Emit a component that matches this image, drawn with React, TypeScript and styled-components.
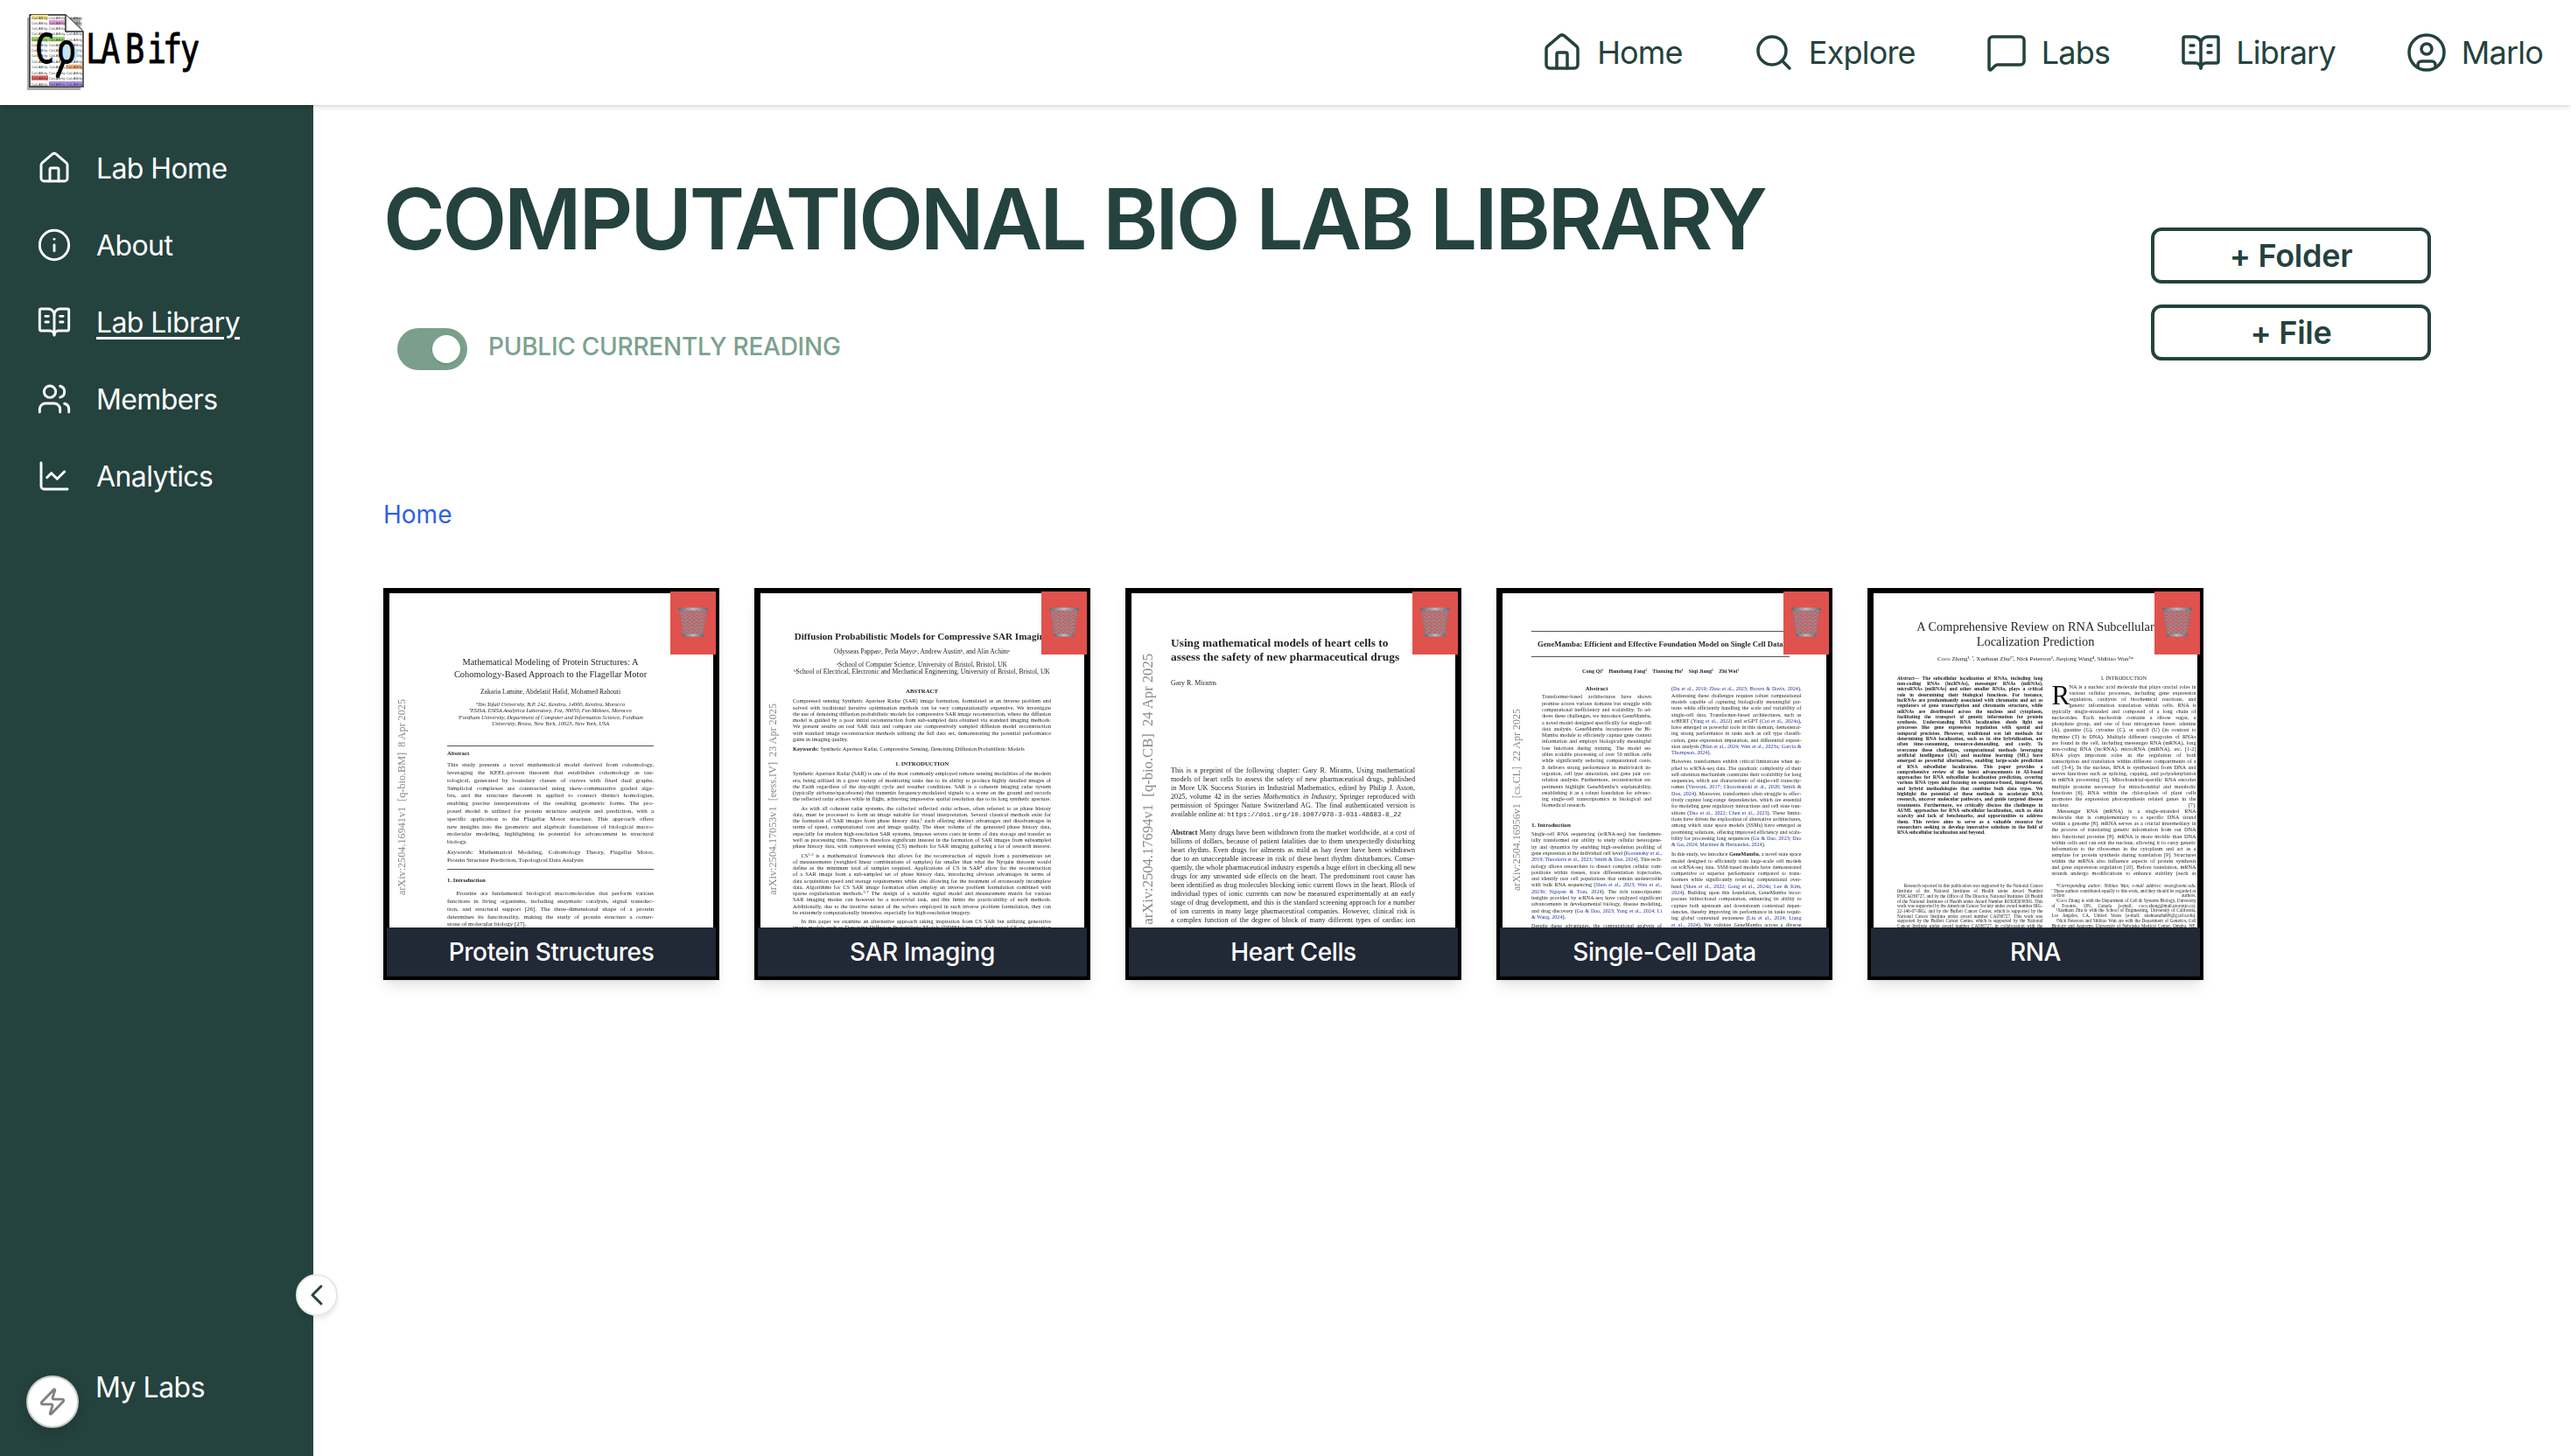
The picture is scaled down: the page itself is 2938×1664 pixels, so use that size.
import { FC, ReactNode } from 'react'
import { createGlobalStyle, styled } from 'styled-components'
import {
  BookOpenText,
  ChartLine,
  ChevronLeft,
  CircleUser,
  House,
  Info,
  MessageSquare,
  Search,
  Users,
  Zap,
} from 'lucide-react'

const DARK = '#24423e'

const GlobalStyle = createGlobalStyle`
  html, body {
    margin: 0;
    padding: 0;
    background: #fff;
    font-family: Inter, "Liberation Sans", sans-serif;
  }
`

const Page = styled.div`
  width: 2938px;
  height: 1664px;
  display: flex;
  flex-direction: column;
  overflow: hidden;
`

const Header = styled.header`
  position: relative;
  z-index: 2;
  flex: 0 0 120px;
  display: flex;
  align-items: center;
  justify-content: space-between;
  padding-right: 32px;
  background: #fff;
  box-shadow: 0 4px 6px -1px rgba(0, 0, 0, 0.1), 0 2px 4px -2px rgba(0, 0, 0, 0.1);
`

const LogoSvg = styled.svg`
  display: block;
  width: 250px;
  height: 120px;
`

const TopNav = styled.nav`
  display: flex;
  align-items: center;
  gap: 80px;
`

const TopLink = styled.a`
  display: flex;
  align-items: center;
  gap: 16px;
  color: ${DARK};
  font-size: 36px;
  line-height: 48px;
  letter-spacing: -0.8px;
`

const Body = styled.div`
  flex: 1;
  display: flex;
  min-height: 0;
`

const Sidebar = styled.aside`
  position: relative;
  flex: 0 0 358px;
  display: flex;
  flex-direction: column;
  box-sizing: border-box;
  padding: 48px 0 32px;
  background: ${DARK};
  color: #fff;
`

const SideList = styled.ul`
  flex: 1;
  list-style: none;
  margin: 0;
  padding: 0 0 0 42px;
  display: flex;
  flex-direction: column;
  gap: 40px;
`

const SideItem = styled.li<{ $active?: boolean }>`
  display: flex;
  align-items: center;
  gap: 28px;
  height: 48px;
  font-size: 32px;
  letter-spacing: -0.6px;
  text-decoration: ${({ $active }) => ($active ? 'underline' : 'none')};
  text-underline-offset: 5px;
  text-decoration-thickness: 3px;
`

const LabsRow = styled.div`
  display: flex;
  align-items: flex-start;
  gap: 19px;
  padding-left: 30px;
  font-size: 32px;
  letter-spacing: -0.5px;
`

const LabsBadge = styled.div`
  box-sizing: border-box;
  width: 60px;
  height: 60px;
  display: flex;
  align-items: center;
  justify-content: center;
  border: 2px solid #ccc;
  border-radius: 50%;
  background: #fff;
  color: #808080;
  box-shadow: 0 4px 16px rgba(0, 0, 0, 0.15);
`

const LabsText = styled.span`
  margin-top: -10px;
  line-height: 48px;
`

const Collapse = styled.button`
  position: absolute;
  right: -28px;
  bottom: 160px;
  box-sizing: border-box;
  width: 48px;
  height: 48px;
  padding: 0;
  display: flex;
  align-items: center;
  justify-content: center;
  border: 2px solid #e5e7eb;
  border-radius: 50%;
  background: #fff;
  color: ${DARK};
  box-shadow: 0 4px 6px -1px rgba(0, 0, 0, 0.1);
`

const Main = styled.main`
  flex: 1;
  box-sizing: border-box;
  padding: 0 160px 0 80px;
  min-width: 0;
`

const TopRow = styled.div`
  display: flex;
  align-items: flex-start;
  justify-content: space-between;
  height: 430px;
`

const Title = styled.h1`
  margin: 72px 0 0;
  color: ${DARK};
  font-size: 96px;
  line-height: 116px;
  font-weight: 600;
  letter-spacing: -3.2px;
  white-space: nowrap;
`

const ToggleRow = styled.div`
  display: flex;
  align-items: center;
  gap: 24px;
  margin: 67px 0 0 16px;
`

const Track = styled.div`
  box-sizing: border-box;
  width: 80px;
  height: 48px;
  display: flex;
  justify-content: flex-end;
  padding: 8px;
  border-radius: 24px;
  background: #7aa08d;
`

const Knob = styled.div`
  width: 32px;
  height: 32px;
  border-radius: 50%;
  background: #fff;
  box-shadow: 0 1px 3px rgba(0, 0, 0, 0.15);
`

const ToggleLabel = styled.span`
  margin-top: -6px;
  color: #7ba28e;
  font-size: 28px;
  font-weight: 500;
  letter-spacing: -0.25px;
`

const Actions = styled.div`
  display: flex;
  flex-direction: column;
  gap: 24px;
  margin-top: 140px;
`

const ActionButton = styled.button`
  box-sizing: border-box;
  width: 320px;
  height: 64px;
  padding: 0;
  border: 4px solid ${DARK};
  border-radius: 12px;
  background: #fff;
  color: ${DARK};
  font-family: inherit;
  font-size: 36px;
  font-weight: 600;
  letter-spacing: -0.3px;
`

const Crumb = styled.a`
  display: block;
  margin-top: 18px;
  color: #2f5fe8;
  font-size: 28px;
  line-height: 40px;
`

const CardRow = styled.div`
  display: flex;
  gap: 40px;
  margin-top: 64px;
`

const Card = styled.article`
  position: relative;
  box-sizing: border-box;
  width: 384px;
  height: 448px;
  display: flex;
  flex-direction: column;
  border: 4px solid #000;
  background: #000;
  box-shadow: 0 10px 15px -3px rgba(0, 0, 0, 0.1), 0 4px 6px -4px rgba(0, 0, 0, 0.1);
`

const Sheet = styled.div<{ $top: number; $left: number; $right: number }>`
  position: relative;
  box-sizing: border-box;
  height: 382px;
  margin: 2px 3px 0;
  padding: ${({ $top, $left, $right }) => `${$top}px ${$right}px 0 ${$left}px`};
  overflow: hidden;
  background: #fff;
  color: #262626;
  font-family: "Liberation Serif", serif;
  filter: blur(0.3px);
`

const Stamp = styled.span<{ $left: number; $bottom: number; $size: number }>`
  position: absolute;
  left: ${({ $left }) => $left}px;
  bottom: ${({ $bottom }) => $bottom}px;
  writing-mode: vertical-rl;
  transform: rotate(180deg);
  color: #8a8a8a;
  font-size: ${({ $size }) => $size}px;
  line-height: 1;
  white-space: pre;
`

const Rule = styled.hr<{ $mt: number }>`
  height: 1px;
  margin: ${({ $mt }) => $mt}px 0 0;
  border: 0;
  background: #555;
`

const TextBlock = styled.div<{
  $size: number
  $lh: number
  $mt: number
  $inset: number
  $bold?: boolean
  $italic?: boolean
  $center?: boolean
  $ragged?: boolean
  $cut?: boolean
}>`
  margin: ${({ $mt, $inset }) => `${$mt}px ${$inset}px 0`};
  font-size: ${({ $size }) => $size}px;
  line-height: ${({ $lh }) => $lh}px;
  font-weight: ${({ $bold }) => ($bold ? 700 : 400)};
  font-style: ${({ $italic }) => ($italic ? 'italic' : 'normal')};
  text-align: ${({ $center }) => ($center ? 'center' : 'left')};
  white-space: nowrap;

  & > div {
    text-align-last: ${({ $center, $ragged }) =>
      $center ? 'center' : $ragged ? 'left' : 'justify'};
  }

  & > div:last-child {
    text-align-last: ${({ $center, $cut }) =>
      $center ? 'center' : $cut ? 'justify' : 'left'};
  }
`

const Cite = styled.span`
  color: #26349a;
`

const Url = styled.span`
  font-family: "Liberation Mono", monospace;
  font-size: 0.92em;
`

const Columns = styled.div<{ $mt: number; $gap: number }>`
  display: grid;
  grid-template-columns: 1fr 1fr;
  column-gap: ${({ $gap }) => $gap}px;
  margin-top: ${({ $mt }) => $mt}px;
`

const DropCap = styled.span`
  float: left;
  width: 20px;
  height: 28px;
  font-size: 31px;
  line-height: 27px;
  color: #111;
`

const CardLabel = styled.div`
  flex: 1;
  display: flex;
  align-items: center;
  justify-content: center;
  background: #212836;
  color: #fff;
  font-size: 28px;
  font-weight: 500;
  letter-spacing: -0.4px;
`

const TrashButton = styled.div`
  position: absolute;
  top: 0;
  right: 0;
  width: 52px;
  height: 72px;
  display: flex;
  align-items: center;
  justify-content: center;
  background: #e0524e;
`

// tiny markup for the paper text: {cite} **bold** __italic__ ~~url~~
const rich = (line: string): ReactNode[] =>
  line.split(/(\{[^}]+\}|\*\*[^*]+\*\*|__[^_]+__|~~[^~]+~~)/).map((part, i) => {
    if (part.startsWith('{')) return <Cite key={i}>{part.slice(1, -1)}</Cite>
    if (part.startsWith('**')) return <b key={i}>{part.slice(2, -2)}</b>
    if (part.startsWith('__')) return <i key={i}>{part.slice(2, -2)}</i>
    if (part.startsWith('~~')) return <Url key={i}>{part.slice(2, -2)}</Url>
    return part
  })

const Para: FC<{
  lines: string[]
  size: number
  lh: number
  mt?: number
  inset?: number
  bold?: boolean
  italic?: boolean
  center?: boolean
  ragged?: boolean
  cut?: boolean
  lead?: ReactNode
}> = ({ lines, size, lh, mt = 0, inset = 0, bold, italic, center, ragged, cut, lead }) => (
  <TextBlock
    $size={size}
    $lh={lh}
    $mt={mt}
    $inset={inset}
    $bold={bold}
    $italic={italic}
    $center={center}
    $ragged={ragged}
    $cut={cut}
  >
    {lead}
    {lines.map((line, i) => (
      <div key={i}>{rich(line)}</div>
    ))}
  </TextBlock>
)

const WasteBasket = () => (
  <svg width="36" height="38" viewBox="0 0 36 38">
    <defs>
      <pattern id="mesh" width="5.6" height="4" patternUnits="userSpaceOnUse">
        <path d="M0 0L5.6 4M5.6 0L0 4" stroke="#87919c" strokeWidth="1.1" />
      </pattern>
      <linearGradient id="rim" x1="0" x2="1" y1="0" y2="0">
        <stop offset="0" stopColor="#5d6772" />
        <stop offset="0.5" stopColor="#b5bfc9" />
        <stop offset="1" stopColor="#5d6772" />
      </linearGradient>
    </defs>
    <path d="M3 4L7 33H29L33 4Z" fill="url(#mesh)" />
    <path d="M3 4L7 33M33 4L29 33" stroke="#76808b" strokeWidth="1" fill="none" />
    <rect x="1" y="1.5" width="34" height="3" rx="1.5" fill="url(#rim)" />
    <rect x="6" y="31.5" width="24" height="3" rx="1.5" fill="url(#rim)" />
  </svg>
)

const ProteinPaper = () => (
  <Sheet $top={72} $left={66} $right={68}>
    <Stamp $left={8} $bottom={37} $size={12.2}>{'arXiv:2504.16941v1  [q-bio.BM]  8 Apr 2025'}</Stamp>
    <Para
      size={10.4}
      lh={14}
      center
      lines={[
        'Mathematical Modeling of Protein Structures: A',
        'Cohomology-Based Approach to the Flagellar Motor',
      ]}
    />
    <Para size={7.6} lh={10} mt={8} center lines={['Zakaria Lamine, Abdelatif Hafid, Mohamed Rahouti']} />
    <Para
      size={6.4}
      lh={7.4}
      mt={5}
      center
      italic
      lines={[
        'ᵃIbn Tofail University, B.P. 242, Kenitra, 14000, Kenitra, Morocco',
        'ᵇESISA, ESISA Analytica Laboratory, Fez, 30050, Fez-Meknes, Morocco',
        'ᶜFordham University, Department of Computer and Information Science, Fordham',
        'University, Bronx, New York, 10023, New York, USA',
      ]}
    />
    <Rule $mt={21} />
    <Para size={6.8} lh={8.8} mt={4.6} bold lines={['Abstract']} />
    <Para
      size={7}
      lh={8.8}
      mt={4.2}
      lines={[
        'This study presents a novel mathematical model derived from cohomology,',
        'leveraging the KEEL-proven theorem that establishes cohomology as tau-',
        'tological, generated by boundary classes of curves with fixed dual graphs.',
        'Simplicial complexes are constructed using skew-commutative graded alge-',
        'bra, and the structure theorem is applied to connect distinct homologies,',
        'enabling precise interpretations of the resulting geometric forms. The pro-',
        'posed model is utilized for protein structure analysis and prediction, with a',
        'specific application to the Flagellar Motor structure. This approach offers',
        'new insights into the geometric and algebraic foundations of biological macro-',
        'molecular modeling, highlighting its potential for advancement in structural',
        'biology.',
      ]}
    />
    <Para
      size={7}
      lh={8.8}
      mt={3.2}
      lines={[
        '__Keywords:__ Mathematical Modeling, Cohomology Theory, Flagellar Motor,',
        'Protein Structure Prediction, Topological Data Analysis',
      ]}
    />
    <Rule $mt={4.8} />
    <Para size={6.8} lh={8.8} mt={8.6} bold lines={['1. Introduction']} />
    <Para
      size={7}
      lh={8.8}
      mt={6.2}
      lines={[
        '\u2003\u2002Proteins are fundamental biological macromolecules that perform various',
        'functions in living organisms, including enzymatic catalysis, signal transduc-',
        'tion, and structural support [26]. The three-dimensional shape of a protein',
        'determines its functionality, making the study of protein structure a corner-',
        'stone of molecular biology [27].',
      ]}
    />
  </Sheet>
)

const SarPaper = () => (
  <Sheet $top={43} $left={37} $right={38}>
    <Stamp $left={8} $bottom={37} $size={12.2}>{'arXiv:2504.17053v1  [eess.IV]  23 Apr 2025'}</Stamp>
    <Para size={11.1} lh={12} bold center lines={['Diffusion Probabilistic Models for Compressive SAR Imaging']} />
    <Para size={7.6} lh={10} mt={7} center lines={['Odysseas Pappasᵃ, Perla Mayoᵃ, Andrew Austinᵇ, and Alin Achimᵃ']} />
    <Para
      size={7.6}
      lh={8}
      mt={6}
      center
      lines={[
        'ᵃSchool of Computer Science, University of Bristol, Bristol, UK',
        'ᵇSchool of Electrical, Electronic and Mechanical Engineering, University of Bristol, Bristol, UK',
      ]}
    />
    <Para size={6.8} lh={8} mt={14} bold center lines={['ABSTRACT']} />
    <Para
      size={6.4}
      lh={7.25}
      mt={3.4}
      lines={[
        'Compressed sensing Synthetic Aperture Radar (SAR) image formation, formulated as an inverse problem and',
        'solved with traditional iterative optimisation methods can be very computationally expensive. We investigate',
        'the use of denoising diffusion probabilistic models for compressive SAR image reconstruction, where the diffusion',
        'model is guided by a poor initial reconstruction from sub-sampled data obtained via standard imaging methods.',
        'We present results on real SAR data and compare our compressively sampled diffusion model reconstruction',
        'with standard image reconstruction methods utilising the full data set, demonstrating the potential performance',
        'gains in imaging quality.',
      ]}
    />
    <Para
      size={6.4}
      lh={7.25}
      mt={4.3}
      lines={['**Keywords:** Synthetic Aperture Radar, Compressive Sensing, Denoising Diffusion Probabilistic Models']}
    />
    <Para size={6.8} lh={8} mt={9.4} bold center lines={['1. INTRODUCTION']} />
    <Para
      size={6.4}
      lh={7.25}
      mt={3.4}
      cut
      lines={[
        'Synthetic Aperture Radar (SAR) is one of the most commonly employed remote sensing modalities of the modern',
        'era, being utilized in a great variety of monitoring tasks due to its ability to produce highly detailed images of',
        'the Earth regardless of the day-night cycle and weather conditions. SAR is a coherent imaging radar system',
        '(typically airborne/spaceborne) that transmits frequency-modulated signals to a scene on the ground and records',
        'the reflected radar echoes while in flight, achieving impressive spatial resolution due to its long synthetic aperture.',
      ]}
    />
    <Para
      size={6.4}
      lh={7.25}
      mt={2.8}
      cut
      lines={[
        '\u2003\u2002As with all coherent radar systems, the collected reflected radar echoes, often referred to as phase history',
        'data, must be processed to form an image suitable for visual interpretation. Several classical methods exist for',
        'the formation of SAR images from phase history data,{¹} each offering distinct advantages and disadvantages in',
        'terms of speed, computational cost and image quality. The sheer volume of the generated phase history data,',
        'especially for modern high-resolution SAR systems, imposes severe costs in terms of data storage and transfer as',
        'well as processing time. There is therefore significant interest in the formation of SAR images from subsampled',
        'phase history data, with compressed sensing (CS) methods for SAR imaging gathering a lot of research interest.',
      ]}
    />
    <Para
      size={6.4}
      lh={7.25}
      mt={3.4}
      lines={[
        '\u2003\u2002CS{²·³} is a mathematical framework that allows for the reconstruction of signals from a parsimonious set',
        'of measurements (weighted linear combinations of samples) far smaller than what the Nyquist theorem would',
        'define as the minimum total of samples required. Applications of CS in SAR{⁴} allow for the reconstruction',
        'of a SAR image from a sub-sampled set of phase history data, introducing obvious advantages in terms of',
        'data acquisition speed and storage requirements while also allowing for the treatment of erroneously incomplete',
        'data. Algorithms for CS SAR image formation often employ an inverse problem formulation combined with',
        'sparse regularisation methods.{⁵⁻⁷} The design of a suitable signal model and measurement matrix for various',
        'SAR imaging modes can however be a non-trivial task, and this limits the practicability of such methods.',
        'Additionally, due to the iterative nature of the solvers employed in such inverse problem formulation, they can',
        'be extremely computationally intensive, especially for high-resolution imagery.',
      ]}
    />
    <Para
      size={6.4}
      lh={7.25}
      mt={2.5}
      cut
      lines={[
        '\u2003\u2002In this paper we examine an alternative approach taking inspiration from CS SAR but utilizing generative',
        'image models such as Denoising Diffusion Probabilistic Models (DDPMs) instead of classical CS reconstruction',
      ]}
    />
  </Sheet>
)

const HeartPaper = () => (
  <Sheet $top={49} $left={45} $right={46}>
    <Stamp $left={11} $bottom={3} $size={16.6}>{'arXiv:2504.17694v1  [q-bio.CB]  24 Apr 2025'}</Stamp>
    <Para
      size={13.4}
      lh={16}
      bold
      ragged
      lines={['Using mathematical models of heart cells to', 'assess the safety of new pharmaceutical drugs']}
    />
    <Para size={8} lh={10} mt={17} lines={['Gary R. Mirams']} />
    <Para
      size={8.2}
      lh={10}
      mt={90}
      lines={[
        'This is a preprint of the following chapter: Gary R. Mirams, Using mathematical',
        'models of heart cells to assess the safety of new pharmaceutical drugs, published',
        'in More UK Success Stories in Industrial Mathematics, edited by Philip J. Aston,',
        '2025, volume 42 in the series __Mathematics in Industry__, Springer reproduced with',
        'permission of Springer Nature Switzerland AG. The final authenticated version is',
        'available online at: ~~https://doi.org/10.1007/978-3-031-48683-8_22~~',
      ]}
    />
    <Para
      size={8.2}
      lh={10}
      mt={11}
      cut
      lines={[
        '**Abstract** Many drugs have been withdrawn from the market worldwide, at a cost of',
        'billions of dollars, because of patient fatalities due to them unexpectedly disturbing',
        'heart rhythm. Even drugs for ailments as mild as hay fever have been withdrawn',
        'due to an unacceptable increase in risk of these heart rhythm disturbances. Conse-',
        'quently, the whole pharmaceutical industry expends a huge effort in checking all new',
        'drugs for any unwanted side effects on the heart. The predominant root cause has',
        'been identified as drug molecules blocking ionic current flows in the heart. Block of',
        'individual types of ionic currents can now be measured experimentally at an early',
        'stage of drug development, and this is the standard screening approach for a number',
        'of ion currents in many large pharmaceutical companies. However, clinical risk is',
        'a complex function of the degree of block of many different types of cardiac ion',
      ]}
    />
  </Sheet>
)

const CellPaper = () => (
  <Sheet $top={43} $left={33} $right={42}>
    <Stamp $left={10} $bottom={42} $size={12}>{'arXiv:2504.16956v1  [cs.CL]  22 Apr 2025'}</Stamp>
    <Rule $mt={0} />
    <Para size={8.7} lh={10} mt={9} inset={7} bold lines={['GeneMamba: Efficient and Effective Foundation Model on Single Cell Data']} />
    <Rule $mt={9} />
    <Para
      size={6.2}
      lh={8}
      mt={12}
      bold
      center
      lines={['Cong Qi¹\u2003Hanzhang Fang¹\u2003Tianxing Hu¹\u2003Siqi Jiang¹\u2003Zhi Wei¹']}
    />
    <Columns $mt={12} $gap={11}>
      <div>
        <Para size={7} lh={8} bold center lines={['Abstract']} />
        <Para
          size={6.1}
          lh={7.3}
          mt={2.35}
          inset={12}
          lines={[
            'Transformer-based architectures have shown',
            'promise across various domains but struggle with',
            'computational inefficiency and scalability. To ad-',
            'dress these challenges, we introduce GeneMamba,',
            'a novel model designed specifically for single-cell',
            'data analysis. GeneMamba incorporates the Bi-',
            'Mamba module to efficiently capture gene context',
            'information and employs biologically meaningful',
            'loss functions during training. The model en-',
            'ables scalable processing of over 50 million cells',
            'while significantly reducing computational costs.',
            'It delivers strong performance in multi-batch in-',
            'tegration, cell type annotation, and gene pair cor-',
            'relation analysis. Furthermore, reconstruction ex-',
            'periments highlight GeneMamba’s explainability,',
            'establishing it as a robust foundation for advanc-',
            'ing single-cell transcriptomics in biological and',
            'biomedical research.',
          ]}
        />
        <Para size={7} lh={8} mt={14} bold lines={['1. Introduction']} />
        <Para
          size={6.1}
          lh={7.3}
          mt={3.35}
          lines={[
            'Single-cell RNA sequencing (scRNA-seq) has fundamen-',
            'tally transformed our ability to study cellular heterogene-',
            'ity and dynamics by enabling high-resolution profiling of',
            'gene expression at the individual cell level ({Korsunsky et al.,}',
            '{2019; Theodoris et al., 2023; Smith & Doe, 2024}). This tech-',
            'nology allows researchers to dissect complex cellular com-',
            'positions within tissues, trace differentiation trajectories,',
            'and identify rare cell populations that remain undetectable',
            'with bulk RNA sequencing ({Shen et al., 2023; Wen et al.,}',
            '{2023b; Nguyen & Tran, 2024}). The rich transcriptomic',
            'insights provided by scRNA-seq have catalyzed significant',
            'advancements in developmental biology, disease modeling,',
            'and drug discovery ({Gu & Dao, 2023; Yang et al., 2024; Li}',
            '{& Wang, 2024}).',
          ]}
        />
        <Para size={6.1} lh={7.3} mt={2.8} cut lines={['Despite these advantages, the computational analysis of']} />
      </div>
      <div>
        <Para
          size={6.1}
          lh={7.3}
          mt={1.35}
          lines={[
            '({Du et al., 2019; Zhao et al., 2023; Brown & Davis, 2024}).',
            'Addressing these challenges requires robust computational',
            'models capable of capturing biologically meaningful pat-',
            'terns while efficiently handling the scale and variability of',
            'single-cell data. Transformer-based architectures, such as',
            'scBERT ({Yang et al., 2022}) and scGPT ({Cui et al., 2024a}),',
            'have emerged as powerful tools in this domain, demonstrat-',
            'ing strong performance in tasks such as cell type classifi-',
            'cation, gene expression imputation, and differential expres-',
            'sion analysis ({Bian et al., 2024; Wen et al., 2023a; Garcia &}',
            '{Thompson, 2024}).',
          ]}
        />
        <Para
          size={6.1}
          lh={7.3}
          mt={2.7}
          lines={[
            'However, transformers exhibit critical limitations when ap-',
            'plied to scRNA-seq data. The quadratic complexity of their',
            'self-attention mechanism constrains their scalability for long',
            'sequences, which are characteristic of single-cell transcrip-',
            'tomes ({Vaswani, 2017; Choromanski et al., 2020; Smith &}',
            '{Doe, 2024}). Moreover, transformers often struggle to effec-',
            'tively capture long-range dependencies, which are essential',
            'for modeling gene regulatory interactions and cell state tran-',
            'sitions ({Dao et al., 2022; Chen et al., 2023}). These limita-',
            'tions have driven the exploration of alternative architectures,',
            'among which state space models (SSMs) have emerged as',
            'promising solutions, offering improved efficiency and scala-',
            'bility for processing long sequences ({Gu & Dao, 2023; Dao}',
            '{& Gu, 2024; Martinez & Hernandez, 2024}).',
          ]}
        />
        <Para
          size={6.1}
          lh={7.3}
          mt={3.8}
          cut
          lines={[
            'In this study, we introduce **GeneMamba**, a novel state space',
            'model designed to efficiently train large-scale cell models',
            'on scRNA-seq data. SSM-based models have demonstrated',
            'competitive or superior performance compared to trans-',
            'formers while significantly reducing computational over-',
            'head ({Shen et al., 2022; Gong et al., 2024a; Lee & Kim,}',
            '{2024}). Building upon this foundation, GeneMamba incor-',
            'porates bidirectional computation, enhancing its ability to',
            'capture both upstream and downstream contextual depen-',
            'dencies, thereby improving its performance in tasks requir-',
            'ing global contextual awareness ({Liu et al., 2024; Liang}',
            '{et al., 2024}). We validate GeneMamba across a diverse',
          ]}
        />
      </div>
    </Columns>
  </Sheet>
)

const RnaPaper = () => (
  <Sheet $top={29.5} $left={27} $right={27}>
    <Para
      size={14.4}
      lh={17}
      center
      lines={['A Comprehensive Review on RNA Subcellular', 'Localization Prediction']}
    />
    <Para
      size={7}
      lh={8}
      mt={7.5}
      center
      lines={['Coco Zhang¹˒⁺, Xuehuan Zhu²⁺, Nick Peterson³, Jieqiong Wang⁴, Shibiao Wan³*']}
    />
    <Columns $mt={13.5} $gap={10}>
      <div>
        <Para
          size={5.7}
          lh={6.29}
          mt={1.3}
          bold
          lines={[
            '__Abstract__— The subcellular localization of RNAs, including long',
            'non-coding RNAs (lncRNAs), messenger RNAs (mRNAs),',
            'microRNAs (miRNAs) and other smaller RNAs, plays a critical',
            'role in determining their biological functions. For instance,',
            'lncRNAs are predominantly associated with chromatin and act as',
            'regulators of gene transcription and chromatin structure, while',
            'mRNAs are distributed across the nucleus and cytoplasm,',
            'facilitating the transport of genetic information for protein',
            'synthesis. Understanding RNA localization sheds light on',
            'processes like gene expression regulation with spatial and',
            'temporal precision. However, traditional wet lab methods for',
            'determining RNA localization, such as in situ hybridization, are',
            'often time-consuming, resource-demanding, and costly. To',
            'overcome these challenges, computational methods leveraging',
            'artificial intelligence (AI) and machine learning (ML) have',
            'emerged as powerful alternatives, enabling large-scale prediction',
            'of RNA subcellular localization. This paper provides a',
            'comprehensive review of the latest advancements in AI-based',
            'approaches for RNA subcellular localization prediction, covering',
            'various RNA types and focusing on sequence-based, image-based,',
            'and hybrid methodologies that combine both data types. We',
            'highlight the potential of these methods to accelerate RNA',
            'research, uncover molecular pathways, and guide targeted disease',
            'treatments. Furthermore, we critically discuss the challenges in',
            'AI/ML approaches for RNA subcellular localization, such as data',
            'scarcity and lack of benchmarks, and opportunities to address',
            'them. This review aims to serve as a valuable resource for',
            'researchers seeking to develop innovative solutions in the field of',
            'RNA subcellular localization and beyond.',
          ]}
        />
        <Para
          size={5.2}
          lh={5.7}
          mt={56}
          cut
          lines={[
            '\u2003\u2002Research reported in this publication was supported by the National Cancer',
            'Institute of the National Institutes of Health under Award Number',
            'P30CA036727, and by the Office of The Director, National Institutes Of Health',
            'of the National Institutes of Health under Award Number R03OD038391. This',
            'work was supported by the American Cancer Society under award number IRG-',
            '22-146-07-IRG, and by the Buffett Cancer Center, which is supported by the',
            'National Cancer Institute under award number CA036727. This work was',
            'supported by the Buffett Cancer Center, which is supported by the National',
            'Cancer Institute under award number CA036727, in collaboration with the',
          ]}
        />
      </div>
      <div>
        <Para size={6.2} lh={7} center lines={['I. INTRODUCTION']} />
        <Para
          size={6.3}
          lh={7.13}
          mt={3}
          cut
          lead={<DropCap>R</DropCap>}
          lines={[
            'NA is a nucleic acid molecule that plays crucial roles in',
            'various cellular processes, including gene expression',
            'regulation, catalysis of biochemical reactions, and',
            'genetic information translation within cells. RNA is',
            'typically single-stranded and composed of a long chain of',
            'nucleotides. Each nucleotide contains a ribose sugar, a',
            'phosphate group, and one of four nitrogenous bases: adenine',
            '(A), guanine (G), cytosine (C), or uracil (U) (in contrast to',
            'thymine (T) in DNA). Multiple different categories of RNAs',
            'are found in the cell, including messenger RNA (mRNA), long',
            'non-coding RNA (lncRNA), microRNA (miRNA), etc. [1-2]',
            'RNA plays important roles in the regulation of both',
            'transcription and translation within different compartments of a',
            'cell [3-4]. In the nucleus, RNA is synthesized from DNA and',
            'serves functions such as splicing, capping, and polyadenylation',
            'in mRNA processing [5]. Mitochondrial-specific RNA encodes',
            'multiple proteins necessary for mitochondrial and metabolic',
            'functions [6]. RNA within the chloroplasts of plant cells',
            'promotes the expression photosynthesis related genes in the',
            'nucleus [7].',
            '\u2002\u2002Messenger RNA (mRNA) is a single-stranded RNA',
            'molecule that is complementary to a specific DNA strand',
            'within a genome [8]. mRNA serves as a crucial intermediary in',
            'the process of translating genetic information from our DNA',
            'into functional proteins [8]. mRNA is more mobile than DNA',
            'within cells and can exit the nucleus, allowing it to carry genetic',
            'information to the ribosomes in the cytoplasm and act as a',
            'template for protein synthesis during translation [9]. Structures',
            'within the mRNA also influence aspects of protein synthesis',
            'and gene expression regulation [10]. Before translation, mRNA',
            'strands undergo modifications to enhance stability (such as',
          ]}
        />
        <Para
          size={5.2}
          lh={5.7}
          mt={8.5}
          cut
          lines={[
            '\u2003__*Corresponding author: Shibiao Wan; e-mail address: swan@unmc.edu.__',
            '⁺These authors contributed equally to this work, and they should be regarded as',
            'co-first authors.',
            '\u2003¹Coco Zhang is with the Department of Cell & Systems Biology, University',
            'of Toronto, ON, Canada (e-mail: coco.zhang@mail.utoronto.ca).',
            '\u2003²Xuehuan Zhu is with the School of Engineering, University of California,',
            'Los Angeles, CA, United States (e-mail: xuehuanzhu99@g.ucla.edu).',
            '\u2003³Nick Peterson and Shibiao Wan are with the Department of Genetics, Cell',
            'Biology and Anatomy, University of Nebraska Medical Center, Omaha, NE,',
          ]}
        />
      </div>
    </Columns>
  </Sheet>
)

const cards: { label: string; paper: ReactNode }[] = [
  { label: 'Protein Structures', paper: <ProteinPaper /> },
  { label: 'SAR Imaging', paper: <SarPaper /> },
  { label: 'Heart Cells', paper: <HeartPaper /> },
  { label: 'Single-Cell Data', paper: <CellPaper /> },
  { label: 'RNA', paper: <RnaPaper /> },
]

const logoRows = [20, 26, 32.3, 38.7, 45, 51, 57.3, 63.7, 70.3, 76.7, 83, 89.3, 96]
const logoMarks: [number, number, number, string][] = [
  [0, 36, 19, '#f6e58d'],
  [1, 56, 19, '#e79ad6'],
  [4, 36, 38, '#9bd66a'],
  [9, 75, 19, '#f2b27a'],
  [11, 36, 19, '#e2625f'],
  [12, 56, 38, '#a98be8'],
]
// left edge of each logo letter, squeezed by logoSqueeze on the x axis
const logoSqueeze = 0.8
const logoLetterX = [40, 65, 98, 115, 143, 168, 186, 206]

const Logo = () => (
  <LogoSvg viewBox="0 0 250 120">
    <rect x="31" y="20" width="61" height="83" fill="#aaa" />
    <path d="M34 17H75L95 36V99H34Z" fill="#fff" stroke="#222" strokeWidth="1.4" />
    {logoMarks.map(([row, x, w, color]) => (
      <rect key={`${row}-${x}`} x={x} y={logoRows[row] - 3} width={w} height={5.4} fill={color} />
    ))}
    {logoRows.map((y) => (
      <text key={y} x="36" y={y + 1.6} fontFamily="Liberation Sans" fontSize="3.9" fill="#333" textLength="58">
        CoLABify CoLABify CoLABify
      </text>
    ))}
    <path d="M75 17V36H95" fill="#fff" stroke="#222" strokeWidth="1.4" />
    <circle cx="79" cy="61" r="10" fill="#bfe3f7" />
    <path d="M72 72L66 87" stroke="#000" strokeWidth="4.5" strokeLinecap="round" />
    <text
      transform={`scale(${logoSqueeze} 1)`}
      x={logoLetterX.map((x) => x / logoSqueeze).join(' ')}
      y="72"
      fontFamily="DejaVu Sans Mono"
      fontSize="46"
      fill="#000"
      stroke="#000"
      strokeWidth="0.9"
      strokeLinejoin="round"
    >
      CoLABify
    </text>
  </LogoSvg>
)

const topLinks = [
  { label: 'Home', Icon: House },
  { label: 'Explore', Icon: Search },
  { label: 'Labs', Icon: MessageSquare },
  { label: 'Library', Icon: BookOpenText },
  { label: 'Marlo', Icon: CircleUser },
]

const sideLinks = [
  { label: 'Lab Home', Icon: House },
  { label: 'About', Icon: Info },
  { label: 'Lab Library', Icon: BookOpenText, active: true },
  { label: 'Members', Icon: Users },
  { label: 'Analytics', Icon: ChartLine },
]

const App = () => (
  <Page>
    <GlobalStyle />
    <Header>
      <Logo />
      <TopNav>
        {topLinks.map(({ label, Icon }) => (
          <TopLink key={label}>
            <Icon size={48} strokeWidth={1.75} />
            {label}
          </TopLink>
        ))}
      </TopNav>
    </Header>
    <Body>
      <Sidebar>
        <SideList>
          {sideLinks.map(({ label, Icon, active }) => (
            <SideItem key={label} $active={active}>
              <Icon size={40} strokeWidth={1.75} />
              {label}
            </SideItem>
          ))}
        </SideList>
        <LabsRow>
          <LabsBadge>
            <Zap size={34} strokeWidth={2} />
          </LabsBadge>
          <LabsText>My Labs</LabsText>
        </LabsRow>
        <Collapse>
          <ChevronLeft size={40} strokeWidth={1.75} />
        </Collapse>
      </Sidebar>
      <Main>
        <TopRow>
          <div>
            <Title>COMPUTATIONAL BIO LAB LIBRARY</Title>
            <ToggleRow>
              <Track>
                <Knob />
              </Track>
              <ToggleLabel>PUBLIC CURRENTLY READING</ToggleLabel>
            </ToggleRow>
          </div>
          <Actions>
            <ActionButton>+ Folder</ActionButton>
            <ActionButton>+ File</ActionButton>
          </Actions>
        </TopRow>
        <Crumb>Home</Crumb>
        <CardRow>
          {cards.map(({ label, paper }) => (
            <Card key={label}>
              {paper}
              <CardLabel>{label}</CardLabel>
              <TrashButton>
                <WasteBasket />
              </TrashButton>
            </Card>
          ))}
        </CardRow>
      </Main>
    </Body>
  </Page>
)

export default App
